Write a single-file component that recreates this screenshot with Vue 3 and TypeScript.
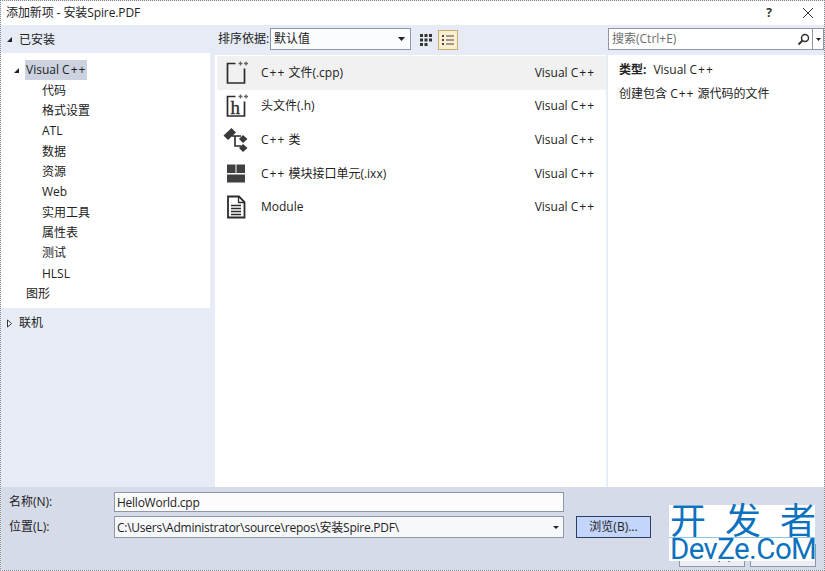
<script setup lang="ts">
const children: string[] = ['代码', '格式设置', 'ATL', '数据', '资源', 'Web', '实用工具', '属性表', '测试', 'HLSL']
const items: { pre: string; name: string; icon: string }[] = [
  { pre: 'C++', name: ' 文件(.cpp)', icon: 'cpp' },
  { pre: '', name: '头文件(.h)', icon: 'h' },
  { pre: 'C++', name: ' 类', icon: 'cls' },
  { pre: 'C++', name: ' 模块接口单元(.ixx)', icon: 'mod' },
  { pre: '', name: 'Module', icon: 'doc' },
]
</script>

<template>
  <div class="win">
    <header class="title">
      <span class="title-text">添加新项 - 安装Spire.PDF</span>
      <span class="help">?</span>
      <svg class="close" width="12" height="12" viewBox="0 0 12 12"><path d="M1 1l10 10M11 1L1 11" stroke="#333" stroke-width="1" fill="none" /></svg>
    </header>

    <main class="body">
      <aside class="left">
        <div class="sec-head">
          <svg width="7" height="7" viewBox="0 0 7 7"><path d="M6 1v5H1z" fill="#222" /></svg>
          <span>已安装</span>
        </div>
        <div class="tree">
          <div class="tree-row root">
            <svg width="7" height="7" viewBox="0 0 7 7"><path d="M6 1v5H1z" fill="#222" /></svg>
            <span class="sel">Visual <span class="cpp">C++</span></span>
          </div>
          <div v-for="c in children" :key="c" class="tree-row child">{{ c }}</div>
          <div class="tree-row shape">图形</div>
        </div>
        <div class="sec-head online">
          <svg width="7" height="9" viewBox="0 0 7 9"><path d="M1.500 1l4 3.500-4 3.500z" fill="#fff" stroke="#333" /></svg>
          <span>联机</span>
        </div>
      </aside>

      <section class="center">
        <div class="toolbar">
          <span class="sort-label">排序依据:</span>
          <div class="select">
            <span>默认值</span>
            <svg width="7" height="4" viewBox="0 0 7 4"><path d="M0 0h7L3.500 4z" fill="#222" /></svg>
          </div>
          <button class="view-btn" type="button" aria-label="小图标">
            <svg width="14" height="14" viewBox="0 0 14 14" fill="#333"><path d="M1 1h3v3H1zM5.500 1h3v3h-3zM10 1h3v3h-3zM1 5.500h3v3H1zM5.500 5.500h3v3h-3zM10 5.500h3v3h-3zM1 10h3v3H1zM5.500 10h3v3h-3z" /></svg>
          </button>
          <button class="view-btn on" type="button" aria-label="列表">
            <svg width="14" height="12" viewBox="0 0 14 12" fill="#444"><path d="M1 1h2v2H1zM5 1.500h8v1H5zM1 5h2v2H1zM5 5.500h8v1H5zM1 9h2v2H1zM5 9.500h8v1H5z" /></svg>
          </button>
        </div>
        <div class="list">
          <div v-for="(it, i) in items" :key="it.name" class="item" :class="{ active: i === 0 }">
            <span class="ico">
              <svg width="30" height="30" viewBox="0 0 30 30">
                <g v-if="it.icon === 'cpp' || it.icon === 'h'">
                  <path d="M12.500 5.500H4.500v19.500h17V10.500" fill="none" stroke="#2b2b2b" stroke-width="1.700" />
                  <path d="M15.500 5.500h4M17.500 3.500v4M21 5.500h4M23 3.500v4" stroke="#666" stroke-width="1.300" fill="none" />
                  <text v-if="it.icon === 'h'" x="7.500" y="22.500" class="h-glyph">h</text>
                </g>
                <g v-else-if="it.icon === 'cls'">
                  <path d="M9 11h9M12 11v10h6" stroke="#2b2b2b" stroke-width="1.600" fill="none" />
                  <path d="M0.500 10.500L8.500 3l4.500 4.500L5 15zM16 14l4-4 4.500 4-4.500 4zM16 23l4-4 4.500 4-4.500 4z" fill="#3a3a3a" />
                </g>
                <g v-else-if="it.icon === 'mod'" fill="#404040">
                  <path d="M4 5.500h8.500v8.500H4zM13.500 5.500H22v8.500h-8.500zM4 15.500h18v8H4z" />
                </g>
                <g v-else>
                  <path d="M5 4.500h11l5.500 5.500v15.500H5z" fill="none" stroke="#2b2b2b" stroke-width="1.800" />
                  <path d="M15.500 4.500v6h6M8 13.500h10M8 16.500h10M8 19.500h10M8 22.500h10" stroke="#2b2b2b" stroke-width="1.300" fill="none" />
                </g>
              </svg>
            </span>
            <span class="item-name"><span v-if="it.pre" class="cpp">{{ it.pre }}</span>{{ it.name }}</span>
            <span class="item-kind">Visual <span class="cpp">C++</span></span>
          </div>
        </div>
      </section>

      <aside class="right">
        <div class="search-row">
          <div class="search">
            <span class="ph">搜索(Ctrl+E)</span>
            <svg class="glass" width="13" height="13" viewBox="0 0 13 13"><circle cx="8" cy="5" r="3.500" fill="none" stroke="#333" stroke-width="1.500" /><path d="M5.500 7.500L1.500 11.500" stroke="#333" stroke-width="2" /></svg>
            <span class="search-arrow"><svg width="5" height="3" viewBox="0 0 5 3"><path d="M0 0h5L2.500 3z" fill="#222" /></svg></span>
          </div>
        </div>
        <div class="detail">
          <div class="kind"><b>类型:</b><span>Visual <span class="cpp">C++</span></span></div>
          <p class="desc">创建包含 <span class="cpp">C++</span> 源代码的文件</p>
        </div>
      </aside>
    </main>

    <footer class="foot">
      <div class="form-row">
        <label>名称(N):</label>
        <div class="input name"><span class="tight">HelloWorld.cpp</span></div>
      </div>
      <div class="form-row second">
        <label>位置(L):</label>
        <div class="input path">
          <span class="tight">C:\Users\Administrator\source\repos\安装Spire.PDF\</span>
          <span class="drop"><svg width="6" height="3" viewBox="0 0 6 3"><path d="M0 0h6L3 3z" fill="#222" /></svg></span>
        </div>
        <button class="browse" type="button">浏览(B)...</button>
      </div>
      <div class="actions">
        <button type="button">添加(A)</button>
        <button type="button">取消</button>
      </div>
    </footer>

    <div class="mark">
      <div class="mark-cn"><span>开</span><span>发</span><span>者</span></div>
      <div class="mark-en">DevZe.CoM</div>
    </div>
  </div>
</template>

<style>
html, body { margin: 0; padding: 0; }
</style>

<style scoped>
.win {
  position: relative;
  width: 825px;
  height: 571px;
  box-sizing: border-box;
  border: 1px dotted #8a8a8a;
  overflow: hidden;
  display: flex;
  flex-direction: column;
  background: #e6ebf5;
  color: #222;
  font: 12px/16px "Open Sans", "Noto Sans CJK SC", sans-serif;
}
.cpp { letter-spacing: 1px; }
.tight { letter-spacing: -0.25px; white-space: nowrap; padding-top: 1px; }
.title {
  flex: 0 0 24px;
  background: #fff;
  display: flex;
  align-items: center;
  padding: 0 10px 0 5px;
}
.title-text { flex: 1; letter-spacing: -0.1px; }
.help { font-weight: 700; margin-right: 30px; color: #333; }
.body { flex: 0 0 462px; display: flex; }
.left { flex: 0 0 209px; display: flex; flex-direction: column; }
.sec-head {
  height: 28px;
  display: flex;
  align-items: center;
  gap: 6px;
  padding: 1px 0 0 5px;
  box-sizing: border-box;
}
.tree {
  height: 255px;
  background: #fff;
  padding-top: 7px;
  box-sizing: border-box;
}
.tree-row { height: 20.360px; display: flex; align-items: center; }
.root { padding-left: 12px; gap: 4px; }
.sel { background: #ccd2df; padding: 0 1px 0 1px; height: 20px; line-height: 20px; margin-left: 1px; white-space: pre; }
.child { padding-left: 41px; }
.shape { padding-left: 25px; }
.online { height: 29px; }
.center { flex: 0 0 391px; margin-left: 5px; display: flex; flex-direction: column; }
.toolbar { height: 30px; display: flex; align-items: flex-start; padding: 3px 0 0 3px; box-sizing: border-box; }
.sort-label { width: 52px; line-height: 22px; white-space: nowrap; }
.select {
  width: 141px;
  height: 22px;
  box-sizing: border-box;
  border: 1px solid #8f96a8;
  background: #fbfcfe;
  display: flex;
  align-items: center;
  justify-content: space-between;
  padding: 0 5px 0 3px;
}
.view-btn {
  width: 20px;
  height: 20px;
  padding: 0;
  border: 1px solid transparent;
  background: none;
  display: flex;
  align-items: center;
  justify-content: center;
  margin: 2px 0 0 5px;
}
.view-btn + .view-btn { margin-left: 2px; }
.view-btn.on { background: #fdf0d0; border-color: #c9ab6f; }
.list { flex: 1; background: #fff; padding-top: 1px; }
.item {
  height: 33.600px;
  margin-left: 2px;
  display: flex;
  align-items: center;
  padding: 0 11px 0 6px;
}
.item.active { background: #f1f1f1; }
.ico { width: 38px; height: 30px; }
.item-name { flex: 1; white-space: pre; }
.item-kind { white-space: pre; }
.h-glyph { font: 400 19px "Liberation Serif", serif; fill: #2b2b2b; stroke: #2b2b2b; stroke-width: 0.3px; }
.right { flex: 0 0 216px; margin-left: 2px; display: flex; flex-direction: column; }
.search-row { height: 30px; padding-top: 3px; box-sizing: border-box; }
.search {
  width: 216px;
  height: 22px;
  box-sizing: border-box;
  border: 1px solid #8f96a8;
  background: #fff;
  display: flex;
  align-items: center;
  padding-left: 3px;
}
.ph { flex: 1; color: #6d6d6d; }
.glass { margin-right: 2px; }
.search-arrow {
  width: 10px;
  height: 20px;
  border-left: 1px solid #8f96a8;
  display: flex;
  align-items: center;
  justify-content: center;
}
.detail { flex: 1; background: #fff; padding: 3px 0 0 11px; }
.kind { display: flex; gap: 7px; height: 24px; align-items: center; white-space: pre; }
.kind b { font-weight: 700; }
.desc { margin: 2px 0 0; height: 20px; line-height: 20px; }
.foot {
  flex: 1;
  background: #d6dbe9;
  padding: 5px 0 0 8px;
  display: flex;
  flex-direction: column;
  gap: 4px;
}
.form-row { display: flex; align-items: center; height: 20px; }
.form-row label { width: 105px; }
.form-row.second { height: 22px; }
.input {
  height: 100%;
  width: 450px;
  box-sizing: border-box;
  border: 1px solid #8f96a8;
  background: #fcfcfd;
  padding-left: 2px;
  display: flex;
  align-items: center;
}
.path { justify-content: space-between; background: #f7f8fb; }
.drop { width: 14px; display: flex; justify-content: center; }
.browse {
  margin-left: 12px;
  width: 75px;
  height: 22px;
  box-sizing: border-box;
  border: 1px solid #2c3e66;
  background: #c4d5fb;
  color: #222;
  font: inherit;
  padding: 0;
}
.actions {
  position: absolute;
  right: 8px;
  bottom: 3px;
  display: flex;
  gap: 5px;
}
.actions button {
  width: 66px;
  height: 23px;
  box-sizing: border-box;
  border: 1px solid #8f96a8;
  background: #eceef3;
  font: inherit;
  color: #222;
  padding: 0;
}
.mark {
  position: absolute;
  left: 668px;
  top: 504px;
  width: 146px;
  height: 56px;
  background: #fff;
  color: #0c72bd;
}
.mark-cn {
  display: flex;
  gap: 19px;
  font-size: 36px;
  line-height: 32px;
  height: 32px;
  padding-left: 1px;
  border-bottom: 1px solid #8cc4ea;
}
.mark-en {
  font: 29.500px/23px Roboto, sans-serif;
  letter-spacing: -0.600px;
  padding-left: 1px;
  white-space: nowrap;
}
</style>
